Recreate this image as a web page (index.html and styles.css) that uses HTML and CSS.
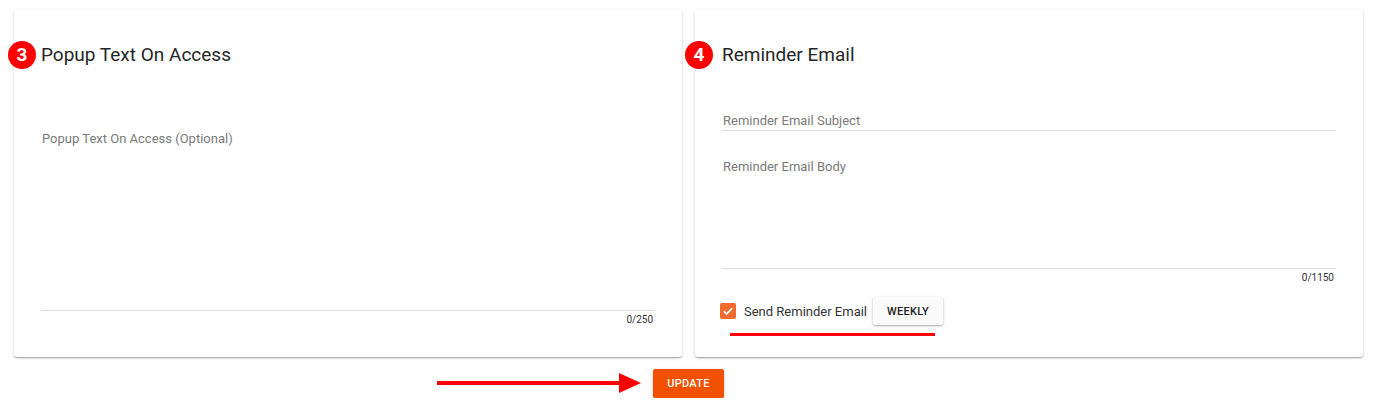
FILE: index.html
```html
<!DOCTYPE html>
<html lang="en">
<head>
  <meta charset="UTF-8" />
  <meta name="viewport" content="width=device-width, initial-scale=1.0" />
  <title>Settings</title>
  <link rel="stylesheet" href="styles.css">
</head>
<body>
  <main class="page">
    <div class="cards">
      <!-- Popup -->
      <section class="card">
        <span class="badge">3</span>
        <h2 class="card__title">Popup Text On Access</h2>
        <div class="field field--popup">
          <span class="field__label">Popup Text On Access (Optional)</span>
        </div>
        <div class="counter">0/250</div>
      </section>

      <!-- Reminder -->
      <section class="card">
        <span class="badge badge--right">4</span>
        <h2 class="card__title">Reminder Email</h2>
        <div class="field field--subject">
          <span class="field__label">Reminder Email Subject</span>
        </div>
        <div class="field field--body">
          <span class="field__label">Reminder Email Body</span>
        </div>
        <div class="counter">0/1150</div>

        <div class="reminder">
          <label class="check">
            <span class="check__box">
              <svg width="12" height="12" viewBox="0 0 12 12"><path d="M1.8 6.2l2.8 2.8 5.6-5.8" fill="none" stroke="#fff" stroke-width="1.7"/></svg>
            </span>
            <span class="check__text">Send Reminder Email</span>
          </label>
          <button class="btn-weekly">WEEKLY</button>
        </div>
        <div class="mark"></div>
      </section>
    </div>

    <div class="actions">
      <div class="update-wrap">
        <svg class="arrow" width="204" height="22" viewBox="0 0 204 22">
          <rect x="0" y="9" width="184" height="4" fill="#f00"/>
          <polygon points="182,1 204,11 182,21" fill="#f00"/>
        </svg>
        <button class="btn-update">UPDATE</button>
      </div>
    </div>
  </main>
</body>
</html>
```

FILE: styles.css
```css
* {
  box-sizing: border-box;
  margin: 0;
  padding: 0;
  font-family: Roboto, "Liberation Sans", sans-serif;
}

body {
  background: #fff;
  color: #212121;
}

.page {
  padding: 10px 17px 0 14px;
}

.cards {
  display: grid;
  grid-template-columns: 1fr 1fr;
  gap: 13px;
}

.card {
  position: relative;
  background: #fff;
  border-radius: 3px;
  padding: 0 27px 21px;
  box-shadow: 0 1px 3px rgba(0, 0, 0, 0.2), 0 1px 1px rgba(0, 0, 0, 0.14), 0 2px 1px -1px rgba(0, 0, 0, 0.12);
}

.badge {
  position: absolute;
  left: -6px;
  top: 31px;
  width: 28px;
  height: 28px;
  border-radius: 50%;
  background: #f00;
  color: #fff;
  font-size: 19px;
  font-weight: 700;
  line-height: 28px;
  text-align: center;
}

.badge--right {
  left: -10px;
}

.card__title {
  margin-top: 33px;
  font-size: 19px;
  font-weight: 400;
  line-height: 24px;
  color: #262626;
}

.field {
  border-bottom: 1px solid #ddd;
  padding-top: 1px;
  padding-left: 1px;
}

.field__label {
  display: block;
  font-size: 13px;
  line-height: 16px;
  color: #7a7a7a;
}

.field--popup {
  margin-top: 63px;
  height: 181px;
}

.field--subject {
  margin-top: 45px;
  height: 19px;
}

.field--body {
  margin-top: 27px;
  height: 111px;
}

.counter {
  margin-top: 3px;
  font-size: 10px;
  line-height: 12px;
  text-align: right;
  padding-right: 2px;
  color: #333;
}

.reminder {
  display: flex;
  align-items: center;
  gap: 6px;
  margin-top: 13px;
  margin-left: -2px;
}

.check {
  display: flex;
  align-items: center;
  gap: 8px;
}

.check__box {
  width: 16px;
  height: 16px;
  border-radius: 2px;
  background: #f26a2e;
  display: flex;
  align-items: center;
  justify-content: center;
}

.check__text {
  font-size: 13px;
  color: #333;
}

.btn-weekly {
  height: 28px;
  width: 70px;
  border: none;
  border-radius: 2px;
  background: #fafafa;
  color: #222;
  font-size: 11px;
  font-weight: 500;
  letter-spacing: 0.3px;
  box-shadow: 0 1px 3px rgba(0, 0, 0, 0.25), 0 1px 1px rgba(0, 0, 0, 0.1);
}

.mark {
  margin: 8px 0 0 8px;
  width: 205px;
  height: 3px;
  background: #f00;
}

.actions {
  display: flex;
  justify-content: center;
  margin-top: 12px;
}

.update-wrap {
  position: relative;
}

.arrow {
  position: absolute;
  right: calc(100% + 12px);
  top: 3px;
}

.btn-update {
  width: 71px;
  height: 29px;
  border: none;
  border-radius: 2px;
  background: #f25200;
  color: #fff;
  font-size: 11px;
  font-weight: 500;
  letter-spacing: 0.3px;
  box-shadow: 0 1px 3px rgba(0, 0, 0, 0.25);
}
```
